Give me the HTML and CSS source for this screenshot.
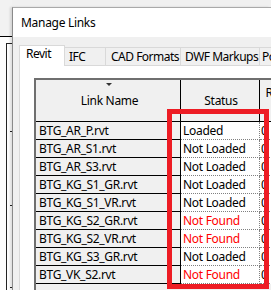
FILE: index.html
```html
<!DOCTYPE html>
<html>
<head>
<meta charset="utf-8">
<title>Manage Links</title>
<link rel="stylesheet" href="styles.css">
</head>
<body>
<div class="screen">
  <div class="behind">
    <div class="behind-top"></div>
    <div class="behind-body">
      <div class="behind-frame">
        <div class="tick t1"></div>
        <div class="tick t2"></div>
        <div class="tick t3"></div>
      </div>
    </div>
  </div>
  <div class="dialog">
    <div class="titlebar">Manage Links</div>
    <div class="client">
      <div class="tabs">
        <div class="tab active tab-revit">Revit</div>
        <div class="tab tab-ifc">IFC</div>
        <div class="tab tab-cad">CAD Formats</div>
        <div class="tab tab-dwf">DWF Markups</div>
        <div class="tab tab-pc">Po</div>
      </div>
      <div class="page">
        <div class="grid">
          <div class="row head">
            <div class="cell name"><span class="sort"></span><span>Link Name</span></div>
            <div class="cell status">Status</div>
            <div class="cell ref">Reference Type</div>
          </div>
          <div class="row"><div class="cell name">BTG_AR_P.rvt</div><div class="cell status">Loaded</div><div class="cell ref">0</div></div>
          <div class="row"><div class="cell name">BTG_AR_S1.rvt</div><div class="cell status">Not Loaded</div><div class="cell ref">0</div></div>
          <div class="row"><div class="cell name">BTG_AR_S3.rvt</div><div class="cell status">Not Loaded</div><div class="cell ref">0</div></div>
          <div class="row"><div class="cell name">BTG_KG_S1_GR.rvt</div><div class="cell status">Not Loaded</div><div class="cell ref">0</div></div>
          <div class="row"><div class="cell name">BTG_KG_S1_VR.rvt</div><div class="cell status">Not Loaded</div><div class="cell ref">0</div></div>
          <div class="row"><div class="cell name">BTG_KG_S2_GR.rvt</div><div class="cell status missing">Not Found</div><div class="cell ref">0</div></div>
          <div class="row"><div class="cell name">BTG_KG_S2_VR.rvt</div><div class="cell status missing">Not Found</div><div class="cell ref">0</div></div>
          <div class="row"><div class="cell name">BTG_KG_S3_GR.rvt</div><div class="cell status">Not Loaded</div><div class="cell ref">0</div></div>
          <div class="row"><div class="cell name">BTG_VK_S2.rvt</div><div class="cell status missing">Not Found</div><div class="cell ref">0</div></div>
        </div>
      </div>
    </div>
  </div>
  <div class="highlight"></div>
</div>
</body>
</html>
```

FILE: styles.css
```css
* { box-sizing: border-box; }
html, body { margin: 0; padding: 0; }
body {
  width: 271px;
  height: 290px;
  overflow: hidden;
  background: #f0f0f0;
  font-family: "Noto Sans", "Open Sans", sans-serif;
  font-size: 12px;
  letter-spacing: -0.3px;
  color: #000;
}
.screen {
  position: relative;
  display: flex;
  width: 271px;
  height: 290px;
  overflow: hidden;
}

/* window behind the dialog */
.behind {
  width: 12px;
  flex: none;
  display: flex;
  flex-direction: column;
}
.behind-top {
  height: 37px;
  background: #f2f2f2;
  border-bottom: 1px solid #000;
}
.behind-body {
  flex: 1;
  background: #fdfdfd;
  padding: 6px 0 0 6px;
}
.behind-frame {
  height: 100%;
  border-left: 1px solid #222;
  border-top: 1px solid #222;
  display: flex;
  flex-direction: column;
  align-items: flex-end;
}
.tick { width: 2px; height: 1px; background: #222; }
.t1 { margin-top: 87px; }
.t2 { margin-top: 73px; }
.t3 { margin-top: 81px; }

/* dialog */
.dialog {
  flex: 1;
  min-width: 0;
  margin-top: 7px;
  border-top: 1px solid #a9a9a9;
  border-left: 1px solid #8a8a8a;
  display: flex;
  flex-direction: column;
  box-shadow: -2px 0 2px rgba(0,0,0,0.12);
}
.titlebar {
  height: 29px;
  flex: none;
  background: #fff;
  padding-left: 8px;
  display: flex;
  align-items: center;
  color: #000;
}
.client {
  flex: 1;
  min-height: 0;
  background: #f0f0f0;
  padding: 8px 0 0 6px;
  display: flex;
  flex-direction: column;
  overflow: hidden;
}

/* tabs */
.tabs {
  height: 21px;
  flex: none;
  display: flex;
  align-items: flex-start;
  margin-bottom: -1px;
  position: relative;
  z-index: 1;
  letter-spacing: -0.5px;
}
.tab {
  flex: none;
  margin-top: 2px;
  height: 18px;
  line-height: 17px;
  border-top: 1px solid #d9d9d9;
  border-right: 1px solid #d9d9d9;
  background: #f0f0f0;
  white-space: nowrap;
  overflow: hidden;
}
.tab.active {
  margin-top: 0;
  height: 21px;
  border-left: 1px solid #d9d9d9;
  background: #fff;
  line-height: 16px;
}
.tab-revit { width: 46px; padding-left: 6px; }
.tab-ifc { width: 41px; padding-left: 4px; }
.tab-cad { width: 75px; padding-left: 5px; }
.tab-dwf { width: 79px; padding-left: 4px; }
.tab-pc { width: 30px; padding-left: 2px; }

.page {
  flex: 1;
  min-height: 0;
  background: #fff;
  border-top: 1px solid #d9d9d9;
  border-left: 1px solid #d9d9d9;
  padding: 12px 0 0 14px;
}

/* data grid */
.grid {
  height: 100%;
  width: 300px;
  border-top: 2px solid #6f6f6f;
  border-left: 2px solid #6f6f6f;
  background: #f0f0f0;
}
.row {
  display: flex;
  height: 18px;
}
.cell {
  flex: none;
  height: 100%;
  white-space: nowrap;
  overflow: hidden;
  line-height: 17px;
}
.cell.name {
  width: 145px;
  padding-left: 3px;
  background: #f0f0f0;
  border-right: 1px solid #000;
  border-bottom: 1px solid #000;
}
.cell.status {
  width: 79px;
  padding-left: 2px;
  background: #fff;
  border-right: 1px dotted #808080;
  border-bottom: 1px dotted #808080;
}
.cell.status.missing { color: #ff0000; }
.cell.ref {
  width: 66px;
  padding-left: 1px;
  background: #fff;
  border-bottom: 1px dotted #808080;
}

.row.head { height: 42px; }
.row.head .cell {
  background: #f0f0f0;
  border-bottom: 1px solid #000;
  border-right: 1px solid #000;
  display: flex;
  align-items: center;
  justify-content: center;
}
.row.head .cell.name { position: relative; }
.row.head .cell.ref {
  white-space: normal;
  text-align: center;
  padding: 0 2px 2px;
  line-height: 15px;
}
.sort {
  position: absolute;
  left: 70px;
  top: 3px;
  width: 0;
  height: 0;
  border-left: 3px solid transparent;
  border-right: 3px solid transparent;
  border-top: 3px solid #333;
}

/* red annotation rectangle drawn over the screenshot */
.highlight {
  position: absolute;
  left: 167px;
  top: 109px;
  width: 102px;
  height: 180px;
  border: 5px solid #ed1c24;
  pointer-events: none;
}
```
